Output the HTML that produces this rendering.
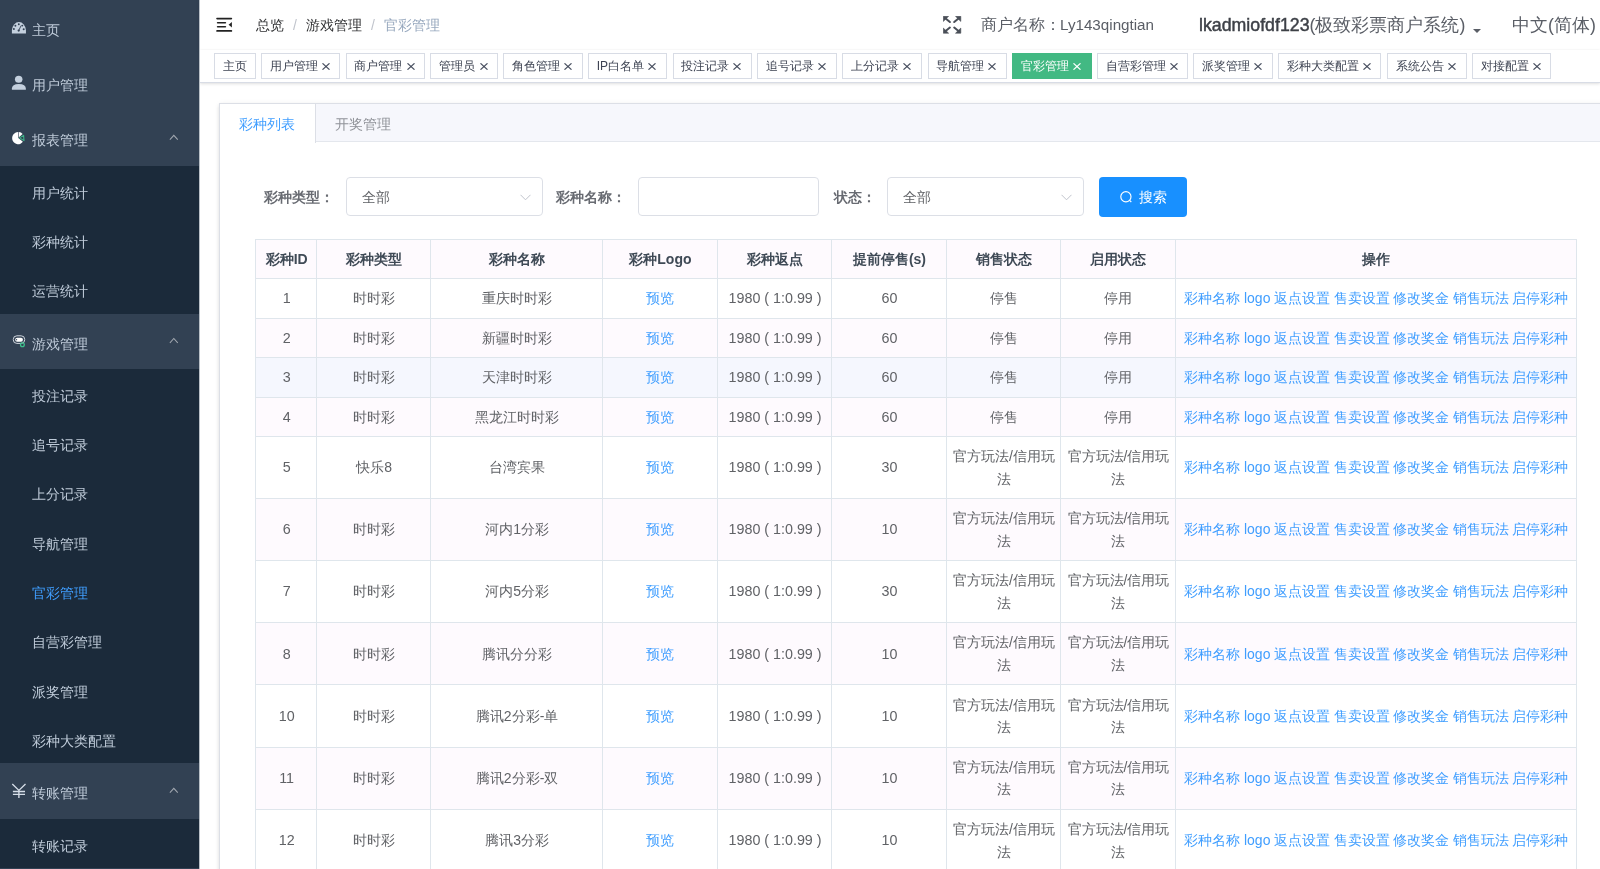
<!DOCTYPE html>
<html><head><meta charset="utf-8">
<style>
*{box-sizing:border-box;margin:0;padding:0}
html,body{width:1600px;height:869px;overflow:hidden;background:#fff;font-family:"Liberation Sans",sans-serif;}
.abs{position:absolute}
/* sidebar */
#side{position:absolute;left:0;top:0;width:199px;height:869px;background:#324153;overflow:hidden}
#sideline{position:absolute;left:199px;top:0;width:1px;height:869px;background:#b9c0c7;z-index:5}
.mi{position:absolute;left:0;width:199px;height:55.2px;color:#bfcbd9;font-size:14px}
.mi .t{position:absolute;left:31.5px;top:3px;line-height:55.2px;height:55.2px}
.si{position:absolute;left:0;width:199px;height:49.33px;background:#1b2a3a;color:#bfcbd9;font-size:14px}
.si .t{position:absolute;left:31.5px;top:3px;line-height:49.33px}
.si.act{color:#409eff}
.chev{position:absolute;left:168px;width:10px;height:6px}
/* navbar */
#nav{position:absolute;left:199px;top:0;width:1401px;height:50px;background:#fff;box-shadow:0 1px 4px rgba(0,21,41,.08)}
#tags{position:absolute;left:200px;top:50px;width:1400px;height:33px;background:#fff;border-bottom:1px solid #d8dce5;box-shadow:0 1px 3px 0 rgba(0,0,0,.12),0 0 3px 0 rgba(0,0,0,.04)}
.tag{position:absolute;top:3px;height:26px;border:1px solid #d8dce5;color:#3d4352;background:#fff;font-size:12px;line-height:23px;padding-left:8px;white-space:nowrap}
.tag.act{background:#42b983;border-color:#42b983;color:#fff}
.tag .x{position:absolute;right:9.5px;top:8.6px}
.tag .tt{position:absolute;left:7.5px;top:1px}
.bc .sep{color:#c0c4cc;margin:0 9px;font-weight:normal}
#card{position:absolute;left:219.4px;top:102.6px;width:1500px;height:900px;border:1px solid #dcdfe6;background:#fff;box-shadow:0 2px 4px 0 rgba(0,0,0,.12),0 0 6px 0 rgba(0,0,0,.04)}
#cardhead{position:absolute;left:0;top:0;width:100%;height:38px;background:#f6f7fc;border-bottom:1px solid #e4e7ed}
#tab1{position:absolute;left:-1px;top:-1px;width:96.6px;height:40px;background:#fff;border:1px solid #dcdfe6;border-bottom:none;border-right:1px solid #dcdfe6;color:#409eff;font-size:14px;line-height:40px;text-align:center;padding-left:0}
#tab2{position:absolute;left:94.6px;top:0;width:96px;height:38px;color:#909399;font-size:14px;line-height:40px;text-align:center}
.lbl{position:absolute;top:177px;height:39px;line-height:41px;font-size:14px;color:#686b72;font-weight:bold;white-space:nowrap}
.sel{position:absolute;top:176.8px;height:38.8px;border:1px solid #dcdfe6;border-radius:4px;background:#fff;font-size:14px;color:#606266}
.sel span{position:absolute;left:15px;top:0;line-height:38px}
.sel .arr{position:absolute;right:11px;top:15.5px}
#btn{position:absolute;left:1098.6px;top:176.6px;width:87.6px;height:40.2px;background:#1890ff;border-radius:4px;color:#fff;font-size:14px}
#btn span{position:absolute;left:39.5px;top:0;line-height:41px}
#tbl{position:absolute;left:255.2px;top:239.2px;width:1322px;height:640px}
#tbl .rb{position:absolute;left:0;width:1321px}
#tbl .hl{position:absolute;left:0;width:1322px;height:1px;background:#dfe6ec}
#tbl .vl{position:absolute;top:0;width:1px;height:640px;background:#dfe6ec}
#tbl .c{position:absolute;display:flex;align-items:center;justify-content:center;text-align:center;font-size:14px;line-height:22.7px;color:#606266;white-space:nowrap;padding-top:1.5px;padding-left:2px}
#tbl .h{color:#3f4a56;font-weight:bold}
#tbl .lk{color:#409eff}
#tbl .ops{word-spacing:-0.3px}
#tbl .num{font-size:14.3px}
body>div{will-change:transform}
</style></head><body>
<div id="side">
  <div class="mi" style="top:0"><span class="t">主页</span></div>
  <div class="mi" style="top:55.2px"><span class="t">用户管理</span></div>
  <div class="mi" style="top:110.4px"><span class="t">报表管理</span></div>
  <div class="si" style="top:165.6px"><span class="t">用户统计</span></div>
  <div class="si" style="top:214.93px"><span class="t">彩种统计</span></div>
  <div class="si" style="top:264.26px"><span class="t">运营统计</span></div>
  <div class="mi" style="top:313.6px"><span class="t">游戏管理</span></div>
  <div class="si" style="top:368.8px"><span class="t">投注记录</span></div>
  <div class="si" style="top:418.13px"><span class="t">追号记录</span></div>
  <div class="si" style="top:467.46px"><span class="t">上分记录</span></div>
  <div class="si" style="top:516.8px"><span class="t">导航管理</span></div>
  <div class="si act" style="top:566.13px"><span class="t">官彩管理</span></div>
  <div class="si" style="top:615.46px"><span class="t">自营彩管理</span></div>
  <div class="si" style="top:664.8px"><span class="t">派奖管理</span></div>
  <div class="si" style="top:714.13px"><span class="t">彩种大类配置</span></div>
  <div class="mi" style="top:763.4px"><span class="t">转账管理</span></div>
  <div class="si" style="top:818.6px"><span class="t">转账记录</span></div>

<svg class="abs" style="left:0;top:0" width="199" height="869" viewBox="0 0 199 869">
  <!-- dashboard -->
  <path d="M11.9 33.4 L11.9 30 A7.05 8.6 0 0 1 25.95 30 L25.95 33.4 Q25.95 33.6 25.6 33.6 L12.3 33.6 Q11.9 33.6 11.9 33.4Z" fill="#c4d0de"/>
  <g fill="#324153">
    <circle cx="18.8" cy="24.3" r="0.95"/><circle cx="15.4" cy="25.7" r="0.95"/><circle cx="22.3" cy="25.6" r="0.95"/>
    <circle cx="13.9" cy="29.1" r="1.0"/><circle cx="23.7" cy="29.2" r="1.0"/><circle cx="18.7" cy="30.6" r="1.15"/>
  </g>
  <path d="M18.7 30.6 L21.1 25.6" stroke="#324153" stroke-width="0.9"/>
  <!-- user -->
  <ellipse cx="18.7" cy="79.3" rx="3.75" ry="3.55" fill="#c4d0de"/>
  <path d="M11.9 89.7 L11.9 88.6 Q11.9 83.9 18.9 83.9 Q25.85 83.9 25.85 88.6 L25.85 89.7Z" fill="#c4d0de"/>
  <!-- pie -->
  <path d="M18.3 138 L18.3 132 A6 6.1 0 1 0 22.9 141.8 Z" fill="#ffffff"/>
  <path d="M18.9 132.1 A6 6 0 0 1 22.6 134 L18.9 137.2Z" fill="#ffffff"/>
  <path d="M19.6 137.9 L23.6 135.4 L24.0 140.6 Z" fill="none" stroke="#3eb489" stroke-width="1.1" stroke-linejoin="round"/>
  <!-- game -->
  <rect x="13.3" y="335.8" width="11.4" height="7.6" rx="3.6" fill="none" stroke="#d0d6de" stroke-width="1"/>
  <rect x="15.2" y="337.8" width="7.7" height="3.9" rx="1.9" fill="#ffffff"/>
  <circle cx="16.6" cy="339.7" r="0.6" fill="#324153"/>
  <circle cx="22.4" cy="344.7" r="1.9" fill="none" stroke="#3ec08d" stroke-width="1.3"/>
  <!-- yen -->
  <path d="M12.3 784.1 L18.9 790.4 L25.5 784.1 M18.9 790.4 L18.9 797.9 M12.9 791.5 H25 M12.9 794.4 H25" fill="none" stroke="#d6dee8" stroke-width="1.35"/>
  <!-- chevrons -->
  <g fill="none" stroke="#a2a8b0" stroke-width="1.05" stroke-linecap="square">
    <path d="M170.2 139.3 L173.8 135.3 L177.4 139.3"/>
    <path d="M170.2 342.5 L173.8 338.5 L177.4 342.5"/>
    <path d="M170.2 792.3 L173.8 788.3 L177.4 792.3"/>
  </g>
</svg>
</div>
<div id="sideline"></div>
<div id="nav">
  <svg class="abs" style="left:16.9px;top:17.1px" width="17" height="15.5" viewBox="0 0 17 15.5">
    <g fill="#222">
      <rect x="0.2" y="0.8" width="16" height="1.6" rx="0.8"/>
      <rect x="0.8" y="4.9" width="9.4" height="1.6" rx="0.8"/>
      <rect x="0.8" y="8.9" width="9.4" height="1.6" rx="0.8"/>
      <rect x="0.2" y="12.9" width="16" height="1.9" rx="0.9"/>
      <path d="M12.6 7.8 L15.9 4.9 L15.9 10.6 Z"/>
    </g>
  </svg>
  <div class="abs bc" style="left:57px;top:0.3px;font-size:14px;line-height:50px;color:#303133;white-space:nowrap"><span>总览</span><span class="sep">/</span><span>游戏管理</span><span class="sep">/</span><span style="color:#97a8be">官彩管理</span></div>
  <svg class="abs" style="left:743.8px;top:15.9px" width="19" height="18" viewBox="0 0 19 18"><g fill="#4a4f58" stroke="#4a4f58" stroke-linejoin="round">
<path d="M0.3 0.3H5.6L0.3 5.4Z" stroke-width="0.6"/><path d="M2 1.9L6.9 6" stroke-width="2" stroke-linecap="round"/>
<path d="M17.8 0.3H12.5L17.8 5.4Z" stroke-width="0.6"/><path d="M16.1 1.9L11.2 6" stroke-width="2" stroke-linecap="round"/>
<path d="M0.3 17.2H5.6L0.3 12.1Z" stroke-width="0.6"/><path d="M2 15.6L6.9 11.6" stroke-width="2" stroke-linecap="round"/>
<path d="M17.8 17.2H12.5L17.8 12.1Z" stroke-width="0.6"/><path d="M16.1 15.6L11.2 11.6" stroke-width="2" stroke-linecap="round"/>
</g></svg>
  <div class="abs" style="left:782px;top:0;font-size:15.8px;line-height:50px;color:#5a5e66;white-space:nowrap">商户名称：<span style="font-size:15.2px;margin-left:-1px">Ly143qingtian</span></div>
  <div class="abs" style="left:1000px;top:0;font-size:17.75px;line-height:50px;color:#5a5e66;white-space:nowrap"><span style="color:#3d4047;-webkit-text-stroke:0.45px #3d4047">lkadmiofdf123</span>(极致彩票商户系统)</div>
  <svg class="abs" style="left:1274px;top:29px" width="8" height="4" viewBox="0 0 8 4"><path d="M0 0H8L4 4Z" fill="#5a5e66"/></svg>
  <div class="abs" style="left:1313px;top:0;font-size:17.75px;line-height:50px;color:#5a5e66;white-space:nowrap">中文(简体)</div>
</div>
<div id="tags">
<div class="tag" style="left:14.25px;width:41.25px"><span class="tt">主页</span></div>
<div class="tag" style="left:61.25px;width:79.00px"><span class="tt">用户管理</span><svg class="x" width="8" height="7" viewBox="0 0 8 7"><path d="M0.5 0.3L7.5 6.7M7.5 0.3L0.5 6.7" stroke="#495060" stroke-width="1.15"/></svg></div>
<div class="tag" style="left:145.50px;width:79.50px"><span class="tt">商户管理</span><svg class="x" width="8" height="7" viewBox="0 0 8 7"><path d="M0.5 0.3L7.5 6.7M7.5 0.3L0.5 6.7" stroke="#495060" stroke-width="1.15"/></svg></div>
<div class="tag" style="left:230.25px;width:68.00px"><span class="tt">管理员</span><svg class="x" width="8" height="7" viewBox="0 0 8 7"><path d="M0.5 0.3L7.5 6.7M7.5 0.3L0.5 6.7" stroke="#495060" stroke-width="1.15"/></svg></div>
<div class="tag" style="left:303.25px;width:79.50px"><span class="tt">角色管理</span><svg class="x" width="8" height="7" viewBox="0 0 8 7"><path d="M0.5 0.3L7.5 6.7M7.5 0.3L0.5 6.7" stroke="#495060" stroke-width="1.15"/></svg></div>
<div class="tag" style="left:388.25px;width:78.50px"><span class="tt">IP白名单</span><svg class="x" width="8" height="7" viewBox="0 0 8 7"><path d="M0.5 0.3L7.5 6.7M7.5 0.3L0.5 6.7" stroke="#495060" stroke-width="1.15"/></svg></div>
<div class="tag" style="left:472.50px;width:79.00px"><span class="tt">投注记录</span><svg class="x" width="8" height="7" viewBox="0 0 8 7"><path d="M0.5 0.3L7.5 6.7M7.5 0.3L0.5 6.7" stroke="#495060" stroke-width="1.15"/></svg></div>
<div class="tag" style="left:557.25px;width:79.25px"><span class="tt">追号记录</span><svg class="x" width="8" height="7" viewBox="0 0 8 7"><path d="M0.5 0.3L7.5 6.7M7.5 0.3L0.5 6.7" stroke="#495060" stroke-width="1.15"/></svg></div>
<div class="tag" style="left:642.25px;width:79.25px"><span class="tt">上分记录</span><svg class="x" width="8" height="7" viewBox="0 0 8 7"><path d="M0.5 0.3L7.5 6.7M7.5 0.3L0.5 6.7" stroke="#495060" stroke-width="1.15"/></svg></div>
<div class="tag" style="left:727.50px;width:79.00px"><span class="tt">导航管理</span><svg class="x" width="8" height="7" viewBox="0 0 8 7"><path d="M0.5 0.3L7.5 6.7M7.5 0.3L0.5 6.7" stroke="#495060" stroke-width="1.15"/></svg></div>
<div class="tag act" style="left:812.00px;width:79.50px"><span class="tt">官彩管理</span><svg class="x" width="8" height="7" viewBox="0 0 8 7"><path d="M0.5 0.3L7.5 6.7M7.5 0.3L0.5 6.7" stroke="#fff" stroke-width="1.15"/></svg></div>
<div class="tag" style="left:897.00px;width:91.00px"><span class="tt">自营彩管理</span><svg class="x" width="8" height="7" viewBox="0 0 8 7"><path d="M0.5 0.3L7.5 6.7M7.5 0.3L0.5 6.7" stroke="#495060" stroke-width="1.15"/></svg></div>
<div class="tag" style="left:993.25px;width:79.50px"><span class="tt">派奖管理</span><svg class="x" width="8" height="7" viewBox="0 0 8 7"><path d="M0.5 0.3L7.5 6.7M7.5 0.3L0.5 6.7" stroke="#495060" stroke-width="1.15"/></svg></div>
<div class="tag" style="left:1078.40px;width:103.10px"><span class="tt">彩种大类配置</span><svg class="x" width="8" height="7" viewBox="0 0 8 7"><path d="M0.5 0.3L7.5 6.7M7.5 0.3L0.5 6.7" stroke="#495060" stroke-width="1.15"/></svg></div>
<div class="tag" style="left:1187.40px;width:79.20px"><span class="tt">系统公告</span><svg class="x" width="8" height="7" viewBox="0 0 8 7"><path d="M0.5 0.3L7.5 6.7M7.5 0.3L0.5 6.7" stroke="#495060" stroke-width="1.15"/></svg></div>
<div class="tag" style="left:1272.30px;width:79.20px"><span class="tt">对接配置</span><svg class="x" width="8" height="7" viewBox="0 0 8 7"><path d="M0.5 0.3L7.5 6.7M7.5 0.3L0.5 6.7" stroke="#495060" stroke-width="1.15"/></svg></div>
</div>
<div id="card">
  <div id="cardhead"></div>
  <div id="tab1">彩种列表</div>
  <div id="tab2">开奖管理</div>
</div>
<div class="lbl" style="left:264px">彩种类型：</div>
<div class="sel" style="left:345.6px;width:197px"><span>全部</span><svg class="arr" width="11" height="7" viewBox="0 0 11 7"><path d="M0.5 0.8L5.5 5.8L10.5 0.8" fill="none" stroke="#c0c4cc" stroke-width="1"/></svg></div>
<div class="lbl" style="left:556.4px">彩种名称：</div>
<div class="sel" style="left:638.4px;width:181.2px"></div>
<div class="lbl" style="left:833.8px">状态：</div>
<div class="sel" style="left:887.4px;width:197px"><span>全部</span><svg class="arr" width="11" height="7" viewBox="0 0 11 7"><path d="M0.5 0.8L5.5 5.8L10.5 0.8" fill="none" stroke="#c0c4cc" stroke-width="1"/></svg></div>
<div id="btn"><svg class="abs" style="left:0;top:0" width="60" height="40" viewBox="0 0 60 40"><circle cx="26.9" cy="19.8" r="5.1" fill="none" stroke="#fff" stroke-width="1.15"/><path d="M30.6 23.4L32.3 25" stroke="#fff" stroke-width="1.15"/></svg><span>搜索</span></div>
<div id="tbl">
<div class="rb" style="top:0.00px;height:39.10px;background:#fefafe"></div>
<div class="rb" style="top:78.50px;height:39.60px;background:#fefafe"></div>
<div class="rb" style="top:118.10px;height:39.70px;background:#f5f7fe"></div>
<div class="rb" style="top:157.80px;height:39.40px;background:#fefafe"></div>
<div class="rb" style="top:258.80px;height:62.20px;background:#fefafe"></div>
<div class="rb" style="top:383.20px;height:62.20px;background:#fefafe"></div>
<div class="rb" style="top:507.60px;height:62.20px;background:#fefafe"></div>
<div class="hl" style="top:0.00px"></div>
<div class="hl" style="top:39.10px"></div>
<div class="hl" style="top:78.50px"></div>
<div class="hl" style="top:118.10px"></div>
<div class="hl" style="top:157.80px"></div>
<div class="hl" style="top:197.20px"></div>
<div class="hl" style="top:258.80px"></div>
<div class="hl" style="top:321.00px"></div>
<div class="hl" style="top:383.20px"></div>
<div class="hl" style="top:445.40px"></div>
<div class="hl" style="top:507.60px"></div>
<div class="hl" style="top:569.80px"></div>
<div class="hl" style="top:632.00px"></div>
<div class="vl" style="left:0.00px"></div>
<div class="vl" style="left:61.30px"></div>
<div class="vl" style="left:175.20px"></div>
<div class="vl" style="left:347.00px"></div>
<div class="vl" style="left:461.80px"></div>
<div class="vl" style="left:576.30px"></div>
<div class="vl" style="left:690.60px"></div>
<div class="vl" style="left:805.20px"></div>
<div class="vl" style="left:919.80px"></div>
<div class="vl" style="left:1321.00px"></div>
<div class="c h" style="left:0.00px;top:0.00px;width:61.30px;height:39.10px">彩种ID</div>
<div class="c h" style="left:61.30px;top:0.00px;width:113.90px;height:39.10px">彩种类型</div>
<div class="c h" style="left:175.20px;top:0.00px;width:171.80px;height:39.10px">彩种名称</div>
<div class="c h" style="left:347.00px;top:0.00px;width:114.80px;height:39.10px">彩种Logo</div>
<div class="c h" style="left:461.80px;top:0.00px;width:114.50px;height:39.10px">彩种返点</div>
<div class="c h" style="left:576.30px;top:0.00px;width:114.30px;height:39.10px">提前停售(s)</div>
<div class="c h" style="left:690.60px;top:0.00px;width:114.60px;height:39.10px">销售状态</div>
<div class="c h" style="left:805.20px;top:0.00px;width:114.60px;height:39.10px">启用状态</div>
<div class="c h" style="left:919.80px;top:0.00px;width:401.20px;height:39.10px">操作</div>
<div class="c" style="left:0.00px;top:39.10px;width:61.30px;height:39.40px"><span class="num">1</span></div>
<div class="c" style="left:61.30px;top:39.10px;width:113.90px;height:39.40px">时时彩</div>
<div class="c" style="left:175.20px;top:39.10px;width:171.80px;height:39.40px">重庆时时彩</div>
<div class="c" style="left:347.00px;top:39.10px;width:114.80px;height:39.40px"><span class="lk">预览</span></div>
<div class="c" style="left:461.80px;top:39.10px;width:114.50px;height:39.40px"><span class="num">1980 ( 1:0.99 )</span></div>
<div class="c" style="left:576.30px;top:39.10px;width:114.30px;height:39.40px"><span class="num">60</span></div>
<div class="c" style="left:690.60px;top:39.10px;width:114.60px;height:39.40px">停售</div>
<div class="c" style="left:805.20px;top:39.10px;width:114.60px;height:39.40px">停用</div>
<div class="c" style="left:919.80px;top:39.10px;width:401.20px;height:39.40px"><span class="ops"><span class="lk">彩种名称</span> <span class="lk">logo</span> <span class="lk">返点设置</span> <span class="lk">售卖设置</span> <span class="lk">修改奖金</span> <span class="lk">销售玩法</span> <span class="lk">启停彩种</span></span></div>
<div class="c" style="left:0.00px;top:78.50px;width:61.30px;height:39.60px"><span class="num">2</span></div>
<div class="c" style="left:61.30px;top:78.50px;width:113.90px;height:39.60px">时时彩</div>
<div class="c" style="left:175.20px;top:78.50px;width:171.80px;height:39.60px">新疆时时彩</div>
<div class="c" style="left:347.00px;top:78.50px;width:114.80px;height:39.60px"><span class="lk">预览</span></div>
<div class="c" style="left:461.80px;top:78.50px;width:114.50px;height:39.60px"><span class="num">1980 ( 1:0.99 )</span></div>
<div class="c" style="left:576.30px;top:78.50px;width:114.30px;height:39.60px"><span class="num">60</span></div>
<div class="c" style="left:690.60px;top:78.50px;width:114.60px;height:39.60px">停售</div>
<div class="c" style="left:805.20px;top:78.50px;width:114.60px;height:39.60px">停用</div>
<div class="c" style="left:919.80px;top:78.50px;width:401.20px;height:39.60px"><span class="ops"><span class="lk">彩种名称</span> <span class="lk">logo</span> <span class="lk">返点设置</span> <span class="lk">售卖设置</span> <span class="lk">修改奖金</span> <span class="lk">销售玩法</span> <span class="lk">启停彩种</span></span></div>
<div class="c" style="left:0.00px;top:118.10px;width:61.30px;height:39.70px"><span class="num">3</span></div>
<div class="c" style="left:61.30px;top:118.10px;width:113.90px;height:39.70px">时时彩</div>
<div class="c" style="left:175.20px;top:118.10px;width:171.80px;height:39.70px">天津时时彩</div>
<div class="c" style="left:347.00px;top:118.10px;width:114.80px;height:39.70px"><span class="lk">预览</span></div>
<div class="c" style="left:461.80px;top:118.10px;width:114.50px;height:39.70px"><span class="num">1980 ( 1:0.99 )</span></div>
<div class="c" style="left:576.30px;top:118.10px;width:114.30px;height:39.70px"><span class="num">60</span></div>
<div class="c" style="left:690.60px;top:118.10px;width:114.60px;height:39.70px">停售</div>
<div class="c" style="left:805.20px;top:118.10px;width:114.60px;height:39.70px">停用</div>
<div class="c" style="left:919.80px;top:118.10px;width:401.20px;height:39.70px"><span class="ops"><span class="lk">彩种名称</span> <span class="lk">logo</span> <span class="lk">返点设置</span> <span class="lk">售卖设置</span> <span class="lk">修改奖金</span> <span class="lk">销售玩法</span> <span class="lk">启停彩种</span></span></div>
<div class="c" style="left:0.00px;top:157.80px;width:61.30px;height:39.40px"><span class="num">4</span></div>
<div class="c" style="left:61.30px;top:157.80px;width:113.90px;height:39.40px">时时彩</div>
<div class="c" style="left:175.20px;top:157.80px;width:171.80px;height:39.40px">黑龙江时时彩</div>
<div class="c" style="left:347.00px;top:157.80px;width:114.80px;height:39.40px"><span class="lk">预览</span></div>
<div class="c" style="left:461.80px;top:157.80px;width:114.50px;height:39.40px"><span class="num">1980 ( 1:0.99 )</span></div>
<div class="c" style="left:576.30px;top:157.80px;width:114.30px;height:39.40px"><span class="num">60</span></div>
<div class="c" style="left:690.60px;top:157.80px;width:114.60px;height:39.40px">停售</div>
<div class="c" style="left:805.20px;top:157.80px;width:114.60px;height:39.40px">停用</div>
<div class="c" style="left:919.80px;top:157.80px;width:401.20px;height:39.40px"><span class="ops"><span class="lk">彩种名称</span> <span class="lk">logo</span> <span class="lk">返点设置</span> <span class="lk">售卖设置</span> <span class="lk">修改奖金</span> <span class="lk">销售玩法</span> <span class="lk">启停彩种</span></span></div>
<div class="c" style="left:0.00px;top:197.20px;width:61.30px;height:61.60px"><span class="num">5</span></div>
<div class="c" style="left:61.30px;top:197.20px;width:113.90px;height:61.60px">快乐8</div>
<div class="c" style="left:175.20px;top:197.20px;width:171.80px;height:61.60px">台湾宾果</div>
<div class="c" style="left:347.00px;top:197.20px;width:114.80px;height:61.60px"><span class="lk">预览</span></div>
<div class="c" style="left:461.80px;top:197.20px;width:114.50px;height:61.60px"><span class="num">1980 ( 1:0.99 )</span></div>
<div class="c" style="left:576.30px;top:197.20px;width:114.30px;height:61.60px"><span class="num">30</span></div>
<div class="c" style="left:690.60px;top:197.20px;width:114.60px;height:61.60px">官方玩法/信用玩<br>法</div>
<div class="c" style="left:805.20px;top:197.20px;width:114.60px;height:61.60px">官方玩法/信用玩<br>法</div>
<div class="c" style="left:919.80px;top:197.20px;width:401.20px;height:61.60px"><span class="ops"><span class="lk">彩种名称</span> <span class="lk">logo</span> <span class="lk">返点设置</span> <span class="lk">售卖设置</span> <span class="lk">修改奖金</span> <span class="lk">销售玩法</span> <span class="lk">启停彩种</span></span></div>
<div class="c" style="left:0.00px;top:258.80px;width:61.30px;height:62.20px"><span class="num">6</span></div>
<div class="c" style="left:61.30px;top:258.80px;width:113.90px;height:62.20px">时时彩</div>
<div class="c" style="left:175.20px;top:258.80px;width:171.80px;height:62.20px">河内1分彩</div>
<div class="c" style="left:347.00px;top:258.80px;width:114.80px;height:62.20px"><span class="lk">预览</span></div>
<div class="c" style="left:461.80px;top:258.80px;width:114.50px;height:62.20px"><span class="num">1980 ( 1:0.99 )</span></div>
<div class="c" style="left:576.30px;top:258.80px;width:114.30px;height:62.20px"><span class="num">10</span></div>
<div class="c" style="left:690.60px;top:258.80px;width:114.60px;height:62.20px">官方玩法/信用玩<br>法</div>
<div class="c" style="left:805.20px;top:258.80px;width:114.60px;height:62.20px">官方玩法/信用玩<br>法</div>
<div class="c" style="left:919.80px;top:258.80px;width:401.20px;height:62.20px"><span class="ops"><span class="lk">彩种名称</span> <span class="lk">logo</span> <span class="lk">返点设置</span> <span class="lk">售卖设置</span> <span class="lk">修改奖金</span> <span class="lk">销售玩法</span> <span class="lk">启停彩种</span></span></div>
<div class="c" style="left:0.00px;top:321.00px;width:61.30px;height:62.20px"><span class="num">7</span></div>
<div class="c" style="left:61.30px;top:321.00px;width:113.90px;height:62.20px">时时彩</div>
<div class="c" style="left:175.20px;top:321.00px;width:171.80px;height:62.20px">河内5分彩</div>
<div class="c" style="left:347.00px;top:321.00px;width:114.80px;height:62.20px"><span class="lk">预览</span></div>
<div class="c" style="left:461.80px;top:321.00px;width:114.50px;height:62.20px"><span class="num">1980 ( 1:0.99 )</span></div>
<div class="c" style="left:576.30px;top:321.00px;width:114.30px;height:62.20px"><span class="num">30</span></div>
<div class="c" style="left:690.60px;top:321.00px;width:114.60px;height:62.20px">官方玩法/信用玩<br>法</div>
<div class="c" style="left:805.20px;top:321.00px;width:114.60px;height:62.20px">官方玩法/信用玩<br>法</div>
<div class="c" style="left:919.80px;top:321.00px;width:401.20px;height:62.20px"><span class="ops"><span class="lk">彩种名称</span> <span class="lk">logo</span> <span class="lk">返点设置</span> <span class="lk">售卖设置</span> <span class="lk">修改奖金</span> <span class="lk">销售玩法</span> <span class="lk">启停彩种</span></span></div>
<div class="c" style="left:0.00px;top:383.20px;width:61.30px;height:62.20px"><span class="num">8</span></div>
<div class="c" style="left:61.30px;top:383.20px;width:113.90px;height:62.20px">时时彩</div>
<div class="c" style="left:175.20px;top:383.20px;width:171.80px;height:62.20px">腾讯分分彩</div>
<div class="c" style="left:347.00px;top:383.20px;width:114.80px;height:62.20px"><span class="lk">预览</span></div>
<div class="c" style="left:461.80px;top:383.20px;width:114.50px;height:62.20px"><span class="num">1980 ( 1:0.99 )</span></div>
<div class="c" style="left:576.30px;top:383.20px;width:114.30px;height:62.20px"><span class="num">10</span></div>
<div class="c" style="left:690.60px;top:383.20px;width:114.60px;height:62.20px">官方玩法/信用玩<br>法</div>
<div class="c" style="left:805.20px;top:383.20px;width:114.60px;height:62.20px">官方玩法/信用玩<br>法</div>
<div class="c" style="left:919.80px;top:383.20px;width:401.20px;height:62.20px"><span class="ops"><span class="lk">彩种名称</span> <span class="lk">logo</span> <span class="lk">返点设置</span> <span class="lk">售卖设置</span> <span class="lk">修改奖金</span> <span class="lk">销售玩法</span> <span class="lk">启停彩种</span></span></div>
<div class="c" style="left:0.00px;top:445.40px;width:61.30px;height:62.20px"><span class="num">10</span></div>
<div class="c" style="left:61.30px;top:445.40px;width:113.90px;height:62.20px">时时彩</div>
<div class="c" style="left:175.20px;top:445.40px;width:171.80px;height:62.20px">腾讯2分彩-单</div>
<div class="c" style="left:347.00px;top:445.40px;width:114.80px;height:62.20px"><span class="lk">预览</span></div>
<div class="c" style="left:461.80px;top:445.40px;width:114.50px;height:62.20px"><span class="num">1980 ( 1:0.99 )</span></div>
<div class="c" style="left:576.30px;top:445.40px;width:114.30px;height:62.20px"><span class="num">10</span></div>
<div class="c" style="left:690.60px;top:445.40px;width:114.60px;height:62.20px">官方玩法/信用玩<br>法</div>
<div class="c" style="left:805.20px;top:445.40px;width:114.60px;height:62.20px">官方玩法/信用玩<br>法</div>
<div class="c" style="left:919.80px;top:445.40px;width:401.20px;height:62.20px"><span class="ops"><span class="lk">彩种名称</span> <span class="lk">logo</span> <span class="lk">返点设置</span> <span class="lk">售卖设置</span> <span class="lk">修改奖金</span> <span class="lk">销售玩法</span> <span class="lk">启停彩种</span></span></div>
<div class="c" style="left:0.00px;top:507.60px;width:61.30px;height:62.20px"><span class="num">11</span></div>
<div class="c" style="left:61.30px;top:507.60px;width:113.90px;height:62.20px">时时彩</div>
<div class="c" style="left:175.20px;top:507.60px;width:171.80px;height:62.20px">腾讯2分彩-双</div>
<div class="c" style="left:347.00px;top:507.60px;width:114.80px;height:62.20px"><span class="lk">预览</span></div>
<div class="c" style="left:461.80px;top:507.60px;width:114.50px;height:62.20px"><span class="num">1980 ( 1:0.99 )</span></div>
<div class="c" style="left:576.30px;top:507.60px;width:114.30px;height:62.20px"><span class="num">10</span></div>
<div class="c" style="left:690.60px;top:507.60px;width:114.60px;height:62.20px">官方玩法/信用玩<br>法</div>
<div class="c" style="left:805.20px;top:507.60px;width:114.60px;height:62.20px">官方玩法/信用玩<br>法</div>
<div class="c" style="left:919.80px;top:507.60px;width:401.20px;height:62.20px"><span class="ops"><span class="lk">彩种名称</span> <span class="lk">logo</span> <span class="lk">返点设置</span> <span class="lk">售卖设置</span> <span class="lk">修改奖金</span> <span class="lk">销售玩法</span> <span class="lk">启停彩种</span></span></div>
<div class="c" style="left:0.00px;top:569.80px;width:61.30px;height:62.20px"><span class="num">12</span></div>
<div class="c" style="left:61.30px;top:569.80px;width:113.90px;height:62.20px">时时彩</div>
<div class="c" style="left:175.20px;top:569.80px;width:171.80px;height:62.20px">腾讯3分彩</div>
<div class="c" style="left:347.00px;top:569.80px;width:114.80px;height:62.20px"><span class="lk">预览</span></div>
<div class="c" style="left:461.80px;top:569.80px;width:114.50px;height:62.20px"><span class="num">1980 ( 1:0.99 )</span></div>
<div class="c" style="left:576.30px;top:569.80px;width:114.30px;height:62.20px"><span class="num">10</span></div>
<div class="c" style="left:690.60px;top:569.80px;width:114.60px;height:62.20px">官方玩法/信用玩<br>法</div>
<div class="c" style="left:805.20px;top:569.80px;width:114.60px;height:62.20px">官方玩法/信用玩<br>法</div>
<div class="c" style="left:919.80px;top:569.80px;width:401.20px;height:62.20px"><span class="ops"><span class="lk">彩种名称</span> <span class="lk">logo</span> <span class="lk">返点设置</span> <span class="lk">售卖设置</span> <span class="lk">修改奖金</span> <span class="lk">销售玩法</span> <span class="lk">启停彩种</span></span></div>
</div>
</body></html>
